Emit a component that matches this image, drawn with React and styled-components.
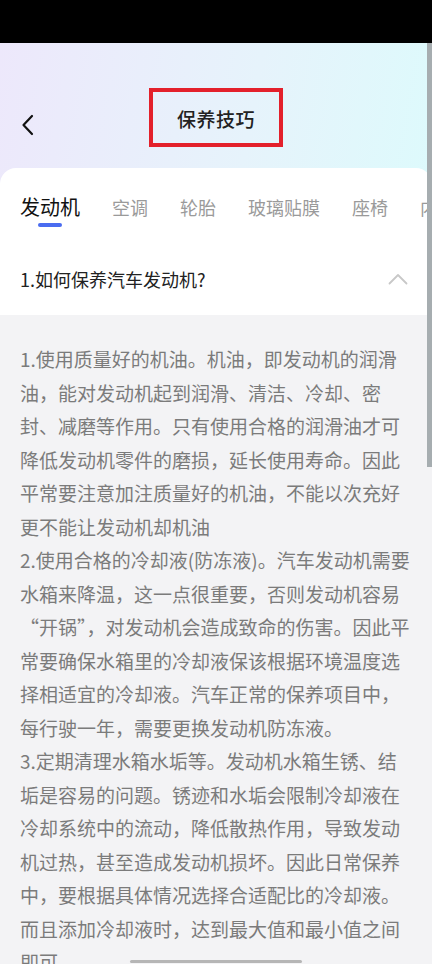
import styled, { createGlobalStyle } from "styled-components"

const GlobalStyle = createGlobalStyle`
    * { box-sizing: border-box; }
    body {
        margin: 0;
        font-family: "Noto Sans CJK SC", "Noto Sans", sans-serif;
        background: #f3f3f5;
    }
`

const Page = styled.div`
    position: relative;
    width: 432px;
    height: 964px;
    overflow: hidden;
    background: #f3f3f5;
`
const StatusBar = styled.div`
    height: 43px;
    background: #000;
`
const Top = styled.div`
    background: linear-gradient(100deg, #ede8fb 0%, #e6f3fb 55%, #dcfbfc 100%);
`
const NavBar = styled.div`
    height: 125px;
    padding-top: 45px;
    display: grid;
    grid-template-columns: 1fr auto 1fr;
    align-items: start;
`
const Back = styled.div`
    padding-left: 21px;
    margin-top: 26px;
    display: flex;
    align-items: center;
`
const TitleBox = styled.div`
    border: 4px solid #e3202b;
    padding: 13px 24px 11px;
    font-size: 19px;
    line-height: 27px;
    font-weight: 500;
    color: #222;
    letter-spacing: 0.5px;
`
const Card = styled.div`
    background: #fff;
    border-radius: 16px 16px 0 0;
    padding-top: 25px;
`
const Tabs = styled.div`
    display: flex;
    align-items: flex-start;
    gap: 32px;
    padding: 0 20px;
    white-space: nowrap;
    overflow: hidden;
`
const Tab = styled.div`
    display: flex;
    flex-direction: column;
    align-items: center;
    flex-shrink: 0;
    font-size: ${p => (p.active ? "20px" : "18px")};
    line-height: 28px;
    color: ${p => (p.active ? "#111" : "#9a9a9a")};
`
const Indicator = styled.div`
    margin-top: 2px;
    width: 24px;
    height: 4px;
    border-radius: 2px;
    background: ${p => (p.active ? "#4a6cf0" : "transparent")};
`
const Question = styled.div`
    margin-top: 16px;
    height: 72px;
    padding: 0 24px 0 20px;
    display: flex;
    align-items: center;
    justify-content: space-between;
    font-size: 18px;
    color: #222;
`
const Content = styled.div`
    padding: 27px 20px 0;
    font-size: 19px;
    line-height: 33.5px;
    color: #7b7b7b;
`
const Para = styled.p`
    margin: 0;
`
const ScrollBar = styled.div`
    position: absolute;
    top: 43px;
    right: 0;
    width: 5px;
    height: 424px;
    background: #a6adb0;
`
const HomeIndicator = styled.div`
    position: absolute;
    bottom: 1px;
    left: 130px;
    width: 172px;
    height: 3px;
    border-radius: 2px;
    background: #b6b6b6;
`

const tabs = ["发动机", "空调", "轮胎", "玻璃贴膜", "座椅", "内饰"]

const App = () => {
  return (
    <Page>
        <GlobalStyle/>
        <StatusBar/>
        <Top>
            <NavBar>
                <Back>
                    <svg width="14" height="22" viewBox="0 0 14 22">
                        <path d="M11 2 L2.5 11 L11 20" fill="none" stroke="#111" strokeWidth="2.2" strokeLinecap="round" strokeLinejoin="round"/>
                    </svg>
                </Back>
                <TitleBox>保养技巧</TitleBox>
                <div/>
            </NavBar>
            <Card>
                <Tabs>
                    {tabs.map((t, i) => (
                        <Tab key={t} active={i === 0}>
                            {t}
                            <Indicator active={i === 0}/>
                        </Tab>
                    ))}
                </Tabs>
                <Question>
                    <span>1.如何保养汽车发动机?</span>
                    <svg width="20" height="12" viewBox="0 0 20 12">
                        <path d="M1.5 10.5 L10 2 L18.5 10.5" fill="none" stroke="#c8c8c8" strokeWidth="1.8" strokeLinecap="round" strokeLinejoin="round"/>
                    </svg>
                </Question>
            </Card>
        </Top>
        <Content>
            <Para>1.使用质量好的机油。机油，即发动机的润滑油，能对发动机起到润滑、清洁、冷却、密封、减磨等作用。只有使用合格的润滑油才可降低发动机零件的磨损，延长使用寿命。因此平常要注意加注质量好的机油，不能以次充好更不能让发动机却机油</Para>
            <Para>2.使用合格的冷却液(防冻液)。汽车发动机需要水箱来降温，这一点很重要，否则发动机容易<wbr/>“开锅”，对发动机会造成致命的伤害。因此平常要确保水箱里的冷却液保该根据环境温度选择相适宜的冷却液。汽车正常的保养项目中，每行驶一年，需要更换发动机防冻液。</Para>
            <Para>3.定期清理水箱水垢等。发动机水箱生锈、结垢是容易的问题。锈迹和水垢会限制冷却液在冷却系统中的流动，降低散热作用，导致发动机过热，甚至造成发动机损坏。因此日常保养中，要根据具体情况选择合适配比的冷却液。而且添加冷却液时，达到最大值和最小值之间即可。</Para>
        </Content>
        <ScrollBar/>
        <HomeIndicator/>
    </Page>
  )
}

export default App
